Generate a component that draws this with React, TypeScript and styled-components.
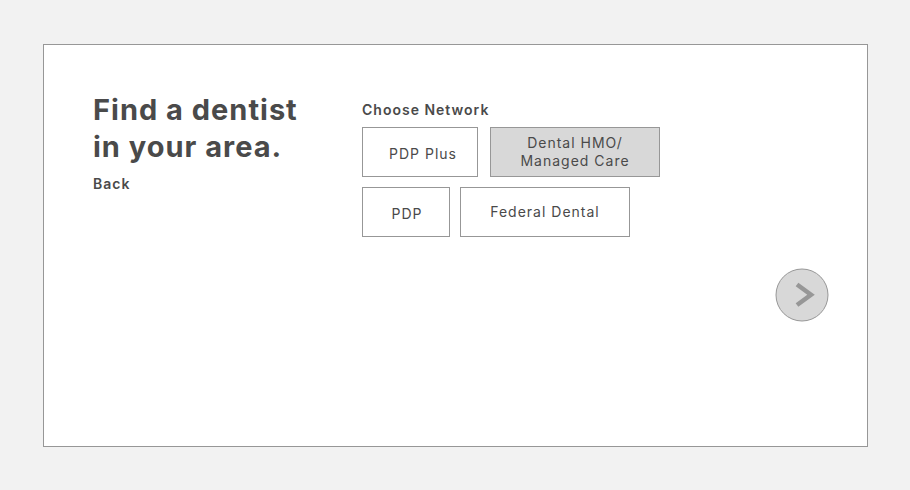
import React, { useState } from "react";
import styled, { createGlobalStyle } from "styled-components";

const GlobalStyle = createGlobalStyle`
  * { box-sizing: border-box; }
  body {
    margin: 0;
    background: #f2f2f2;
    color: #4a4a4a;
    font-family: Inter, Lato, sans-serif;
  }
  button { font: inherit; letter-spacing: inherit; color: inherit; cursor: pointer; }
`;

const Page = styled.div`
  min-height: 100vh;
  padding: 44px 42px 43px 43px;
  display: flex;
`;

const Panel = styled.main`
  flex: 1;
  display: grid;
  grid-template-columns: 269px 1fr auto;
  background: #fff;
  border: 1px solid #979797;
  padding: 46px 38px 46px 49px;
`;

const Title = styled.h1`
  margin: 0;
  font-size: 29px;
  line-height: 37px;
  font-weight: 700;
  letter-spacing: 1px;
  white-space: nowrap;
`;

const BackLink = styled.a`
  display: inline-block;
  margin-top: 9px;
  font-size: 14px;
  line-height: 20px;
  font-weight: 600;
  letter-spacing: 1px;
  color: inherit;
  text-decoration: none;
`;

const Networks = styled.section`
  padding-top: 9px;
`;

const Label = styled.h2`
  margin: 0 0 7px;
  font-size: 14px;
  line-height: 20px;
  font-weight: 600;
  letter-spacing: 1px;
`;

const Row = styled.div<{ $gap: number }>`
  display: flex;
  gap: ${(p) => p.$gap}px;
  margin-bottom: 10px;
`;

const Option = styled.button<{ $width: number; $inset?: string }>`
  width: ${(p) => p.$width}px;
  height: 50px;
  padding: ${(p) => p.$inset ?? "0"};
  background: #fff;
  border: 1px solid #979797;
  font-size: 14px;
  font-weight: 400;
  line-height: 18px;
  letter-spacing: 1px;
  white-space: pre-line;
  &[aria-pressed="true"] { background: #d8d8d8; }
`;

const NextButton = styled.button`
  align-self: center;
  margin-top: 98px;
  width: 54px;
  height: 54px;
  padding: 0;
  border: 0;
  background: none;
  svg { display: block; }
`;

const rows = [
  { gap: 12, items: [{ name: "PDP Plus", width: 116, inset: "4px 0 0 6px" }, { name: "Dental HMO/\nManaged Care", width: 170 }] },
  { gap: 10, items: [{ name: "PDP", width: 88, inset: "4px 0 0 2px" }, { name: "Federal Dental", width: 170 }] },
];

export default function App() {
  const [selected, setSelected] = useState("Dental HMO/\nManaged Care");
  return (
    <Page>
      <GlobalStyle />
      <Panel>
        <header>
          <Title>Find a dentist<br />in your area.</Title>
          <BackLink href="#">Back</BackLink>
        </header>
        <Networks aria-labelledby="network-label">
          <Label id="network-label">Choose Network</Label>
          {rows.map((row) => (
            <Row key={row.gap} $gap={row.gap}>
              {row.items.map((item) => (
                <Option key={item.name} type="button" $width={item.width} $inset={item.inset}
                  aria-pressed={selected === item.name} onClick={() => setSelected(item.name)}>
                  {item.name}
                </Option>
              ))}
            </Row>
          ))}
        </Networks>
        <NextButton type="button" aria-label="Next">
          <svg width="54" height="54" viewBox="0 0 54 54" fill="none" stroke="#979797">
            <circle cx="27" cy="27" r="26" fill="#d8d8d8" />
            <path d="M22 16.5L36 26.7L22 37" strokeWidth="4.5" />
          </svg>
        </NextButton>
      </Panel>
    </Page>
  );
}
